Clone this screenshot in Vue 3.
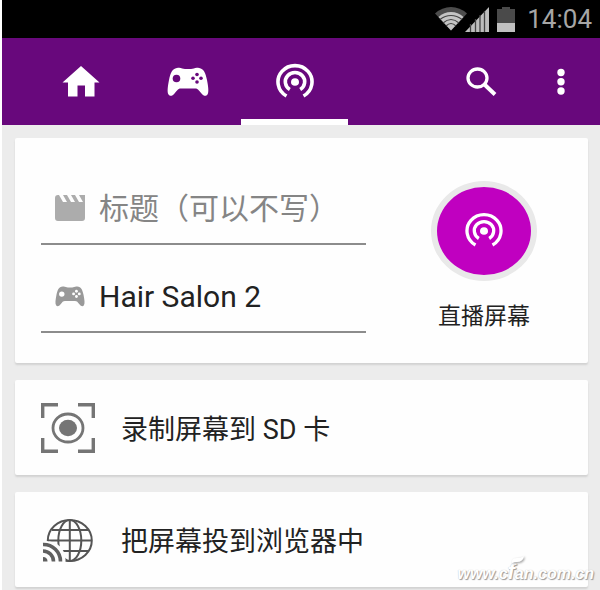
<script setup>
import { ref } from 'vue'

const title = ref('')
const game = ref('Hair Salon 2')
const active = ref('stream')
</script>

<template>
  <div class="app">
    <div class="status">
      <svg class="wifi" width="32" height="24" viewBox="0 0 32 24" aria-hidden="true">
        <path d="M16 23.500L0 6.500Q7 0 16 0T32 6.500z" fill="#4c4c4c" />
        <path d="M16 23.500L3.500 10Q9 5 16 5T28.500 10z" fill="#c4c4c4" />
        <path d="M5 12.500Q10 8.500 16 8.500T27 12.500M8 16Q12 12.500 16 12.500T24 16M11 19Q13.500 16.500 16 16.500T21 19" fill="none" stroke="#444" stroke-width="1.200" />
      </svg>
      <svg class="signal" width="24" height="25" viewBox="0 0 24 25" aria-hidden="true">
        <path d="M0 25L24 0V25z" fill="#bdbdbd" />
        <path d="M5.500 17v8M10.500 12v13M15 8v17M19.500 4v21" stroke="#444" stroke-width="1.300" />
      </svg>
      <svg class="battery" width="18" height="25" viewBox="0 0 18 25" aria-hidden="true">
        <path d="M5 0h8v2h5v15H0V2h5z" fill="#4a4a4a" />
        <path d="M0 16h18v9H0z" fill="#c0c0c0" />
      </svg>
      <time>14:04</time>
    </div>

    <header class="bar">
      <nav class="tabs">
        <button class="tab" :class="{ on: active === 'home' }" aria-label="主页" @click="active = 'home'">
          <svg width="38" height="32" viewBox="0 0 38 32"><path d="M19 0L37.500 16.500H32.500V30.500H23V19.500H15.500V30.500H6V16.500H.5z" fill="#fff" /></svg>
        </button>
        <button class="tab" :class="{ on: active === 'games' }" aria-label="游戏" @click="active = 'games'">
          <svg width="42" height="30" viewBox="0 0 42 30">
            <path d="M11 .8C14 .2 15.500 2 18 2H24C26.500 2 28 .2 31 .8C37 1.500 38.500 6 40 13C41.300 20 42 25 40.500 27.500C39 29.800 36.500 29 34.500 26.500C31.500 23 31 21.500 28 21.500H14C11 21.500 10.500 23 7.500 26.500C5.500 29 3 29.800 1.500 27.500C0 25 .7 20 2 13C3.500 6 5 1.500 11 .8z" fill="#fff" />
            <g fill="#68087c"><circle cx="9.500" cy="11.500" r="3.800" /><circle cx="30" cy="7.500" r="1.800" /><circle cx="30" cy="15" r="1.800" /><circle cx="26" cy="11.300" r="1.800" /><circle cx="34" cy="11.300" r="1.800" /></g>
          </svg>
        </button>
        <button class="tab" :class="{ on: active === 'stream' }" aria-label="直播" @click="active = 'stream'">
          <svg width="38" height="38" viewBox="0 0 38 38">
            <g fill="none" stroke="#fff" stroke-width="3.600"><path d="M10.500 33A17 16.300 0 1 1 27.500 33" /><path d="M13.800 26.500A9.700 9.200 0 1 1 24.200 26.500" /></g>
            <ellipse cx="19" cy="19" rx="4" ry="3.800" fill="#fff" />
          </svg>
        </button>
      </nav>
      <div class="actions">
        <button class="action" aria-label="搜索">
          <svg width="32" height="30" viewBox="0 0 32 30"><ellipse cx="12.500" cy="11" rx="9.500" ry="9" fill="none" stroke="#fff" stroke-width="3.300" /><path d="M19.500 17.500L30 27.500" stroke="#fff" stroke-width="4" /></svg>
        </button>
        <button class="action" aria-label="更多">
          <svg width="8" height="28" viewBox="0 0 8 28" fill="#fff"><circle cx="4" cy="4.500" r="3.700" /><circle cx="4" cy="13.700" r="3.700" /><circle cx="4" cy="23" r="3.700" /></svg>
        </button>
      </div>
    </header>

    <main class="content">
      <section class="card stream">
        <form class="fields" @submit.prevent>
          <label class="field">
            <svg width="30" height="26" viewBox="0 0 30 26" role="img" aria-label="标题">
              <path d="M3 0H4L8 7H12L8 0H12L16 7H20L16 0H20L24 7H28L24 0H30V23Q30 26 27 26H3Q0 26 0 23V3Q0 0 3 0z" fill="#acacac" />
            </svg>
            <input v-model="title" type="text" placeholder="标题（可以不写）" />
          </label>
          <label class="field">
            <svg width="30" height="21" viewBox="0 0 42 30" preserveAspectRatio="none" role="img" aria-label="游戏">
              <path d="M11 .8C14 .2 15.500 2 18 2H24C26.500 2 28 .2 31 .8C37 1.500 38.500 6 40 13C41.300 20 42 25 40.500 27.500C39 29.800 36.500 29 34.500 26.500C31.500 23 31 21.500 28 21.500H14C11 21.500 10.500 23 7.500 26.500C5.500 29 3 29.800 1.500 27.500C0 25 .7 20 2 13C3.500 6 5 1.500 11 .8z" fill="#999" />
              <g fill="#fff"><circle cx="9.500" cy="11.500" r="3.800" /><circle cx="30" cy="7.500" r="2" /><circle cx="30" cy="15" r="2" /><circle cx="26" cy="11.300" r="2" /><circle cx="34" cy="11.300" r="2" /></g>
            </svg>
            <input v-model="game" type="text" />
          </label>
        </form>
        <div class="launch">
          <button id="go-live" class="live">
            <svg width="38" height="38" viewBox="0 0 38 38" aria-hidden="true">
              <g fill="none" stroke="#fff" stroke-width="3.300"><path d="M10.500 33A17 16.300 0 1 1 27.500 33" /><path d="M13.800 26.500A9.700 9.200 0 1 1 24.200 26.500" /></g>
              <ellipse cx="19" cy="19" rx="4" ry="3.800" fill="#fff" />
            </svg>
          </button>
          <label for="go-live">直播屏幕</label>
        </div>
      </section>

      <button class="card row">
        <svg width="54" height="50" viewBox="0 0 54 50" aria-hidden="true">
          <g fill="none" stroke="#757575"><path d="M1.700 15V1.700H17M37 1.700H52.300V15M52.300 35V48.300H37M17 48.300H1.700V35" stroke-width="3.400" /><ellipse cx="27" cy="25" rx="15" ry="14" stroke-width="2.800" /></g>
          <ellipse cx="27" cy="25" rx="9" ry="8.300" fill="#757575" />
        </svg>
        <span>录制屏幕到 SD 卡</span>
      </button>

      <button class="card row">
        <svg width="54" height="50" viewBox="0 0 54 50" aria-hidden="true">
          <g fill="none" stroke="#555" stroke-width="2">
            <ellipse cx="28.800" cy="25.500" rx="22" ry="20.500" />
            <ellipse cx="28.800" cy="25.500" rx="11.500" ry="20.500" />
            <path d="M28.800 5V46M6.500 25.500H50.500M11 15H47M11 36H47" />
          </g>
          <path d="M0 26H6Q23 28 24.500 44V50H0z" fill="#fefefe" />
          <path d="M2 42Q6.500 42 6.500 46.500H2z" fill="#606060" />
          <path d="M2 36A10.500 10.500 0 0 1 12.500 46.500M2 29.500A17 17 0 0 1 19.500 46.500" fill="none" stroke="#606060" stroke-width="3.600" />
        </svg>
        <span>把屏幕投到浏览器中</span>
      </button>
    </main>

    <div class="watermark">www.c<span class="tall">f</span>an.com.cn
      <svg class="swoosh" width="14" height="8" viewBox="0 0 14 8" aria-hidden="true"><path d="M1 7Q0 2 6 2Q10 2 13 0Q12 6 6 6Q3 6 1 7z" fill="#fff" /></svg>
    </div>
  </div>
</template>

<style>
body {
  margin: 0;
  background: #fff;
}
</style>

<style scoped>
.app {
  position: relative;
  margin-left: 2px;
  min-height: 100vh;
  overflow: hidden;
  background: #ececec;
  font-family: Roboto, "Noto Sans CJK SC", sans-serif;
  color: #222;
}
button {
  border: 0;
  padding: 0;
  background: none;
  font: inherit;
  color: inherit;
  cursor: pointer;
}
svg {
  display: block;
  flex: none;
}
.status {
  display: flex;
  justify-content: flex-end;
  align-items: center;
  height: 38px;
  padding-right: 8px;
  box-sizing: border-box;
  background: #000;
  color: #a6a6a6;
  font-size: 26px;
}
.wifi {
  margin-right: -2px;
}
.battery {
  margin: 0 12px 0 8px;
}
.bar {
  display: flex;
  justify-content: space-between;
  height: 87px;
  padding: 0 12px 0 25px;
  background: #68087c;
}
.tabs,
.actions {
  display: flex;
}
.tab {
  display: flex;
  align-items: center;
  justify-content: center;
  width: 107px;
  border-top: 6px solid transparent;
  border-bottom: 6px solid transparent;
}
.tab.on {
  border-bottom-color: #fff;
}
.action {
  display: flex;
  align-items: center;
  justify-content: center;
  width: 54px;
}
.action + .action {
  margin-left: 26px;
}
.content {
  display: flex;
  flex-direction: column;
  gap: 17px;
  padding: 13px 12px 0 13px;
}
.card {
  background: #fefefe;
  border-radius: 2px;
  box-shadow: 0 2px 2px #d2d2d2;
}
.stream {
  display: flex;
  justify-content: space-between;
  padding: 43px 51px 30px 26px;
}
.fields {
  flex: 1;
  max-width: 325px;
}
.field {
  display: flex;
  align-items: center;
  gap: 14px;
  height: 54px;
  padding: 0 14px 8px;
  border-bottom: 2px solid #8c8c8c;
}
.field + .field {
  margin-top: 24px;
}
.field input {
  flex: 1;
  min-width: 0;
  height: 44px;
  padding: 0;
  border: 0;
  outline: 0;
  background: none;
  color: #222;
  font-family: inherit;
  font-size: 30px;
}
.field input::placeholder {
  color: #858585;
  opacity: 1;
}
.launch {
  display: flex;
  flex-direction: column;
  align-items: center;
  gap: 20px;
  font-size: 23px;
  line-height: 32px;
}
.live {
  display: flex;
  align-items: center;
  justify-content: center;
  width: 106px;
  height: 100px;
  border: 6px solid #e9e9e9;
  border-radius: 50%;
  background: #c000c0;
}
.row {
  display: flex;
  align-items: center;
  gap: 26px;
  height: 95px;
  padding: 0 26px;
  text-align: left;
  font-size: 27px;
}
.watermark {
  position: absolute;
  right: 6px;
  bottom: 5px;
  color: #fff;
  font: italic bold 16px/22px "Liberation Sans", sans-serif;
  text-shadow: 1px 1px 1px #999, 0 0 1px #bbb;
}
.tall {
  font-size: 22px;
}
.swoosh {
  position: absolute;
  left: 54px;
  top: -5px;
  filter: drop-shadow(1px 1px 1px #999);
}
</style>
